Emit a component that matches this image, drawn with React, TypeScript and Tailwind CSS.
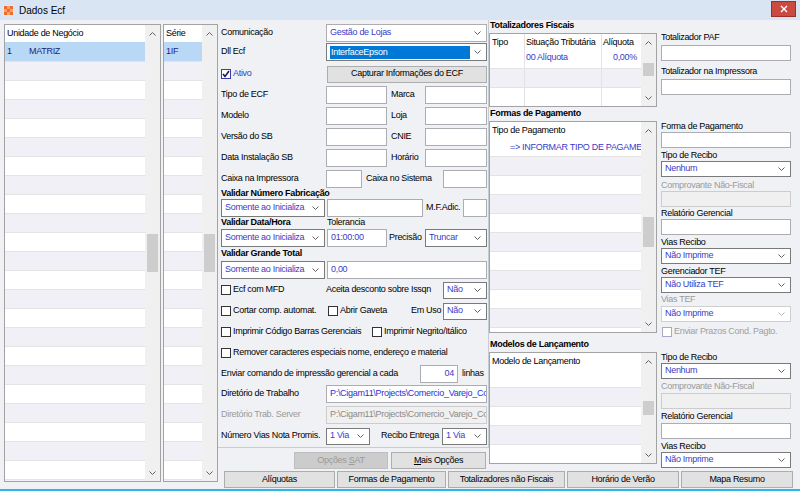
import React from "react";

const blue = "text-[#3b3bc8]";

function Chev({ up = false, light = false }: { up?: boolean; light?: boolean }) {
  return (
    <svg width="7" height="4" viewBox="0 0 7 4" className="shrink-0">
      <polyline
        points={up ? "0.5,3.5 3.5,0.5 6.5,3.5" : "0.5,0.5 3.5,3.5 6.5,0.5"}
        fill="none"
        stroke={light ? "#b4b4b4" : "#606060"}
        strokeWidth="1"
      />
    </svg>
  );
}

function Select({
  value,
  className = "",
  disabled = false,
  selected = false,
}: {
  value: string;
  className?: string;
  disabled?: boolean;
  selected?: boolean;
}) {
  return (
    <div
      className={`flex items-center shrink-0 bg-white border ${
        disabled ? "border-[#cfcfcf]" : "border-[#7a7a7a]"
      } pl-[3px] pr-[5px] ${className}`}
    >
      <div className="flex-1 min-w-0 overflow-hidden whitespace-nowrap mr-[4px]">
        {selected ? (
          <span className="block bg-[#0078d7] text-white pl-[1px] leading-[13px]">{value}</span>
        ) : (
          <span className={blue}>{value}</span>
        )}
      </div>
      <Chev light={disabled} />
    </div>
  );
}

function Input({
  children,
  className = "",
  disabled = false,
}: {
  children?: React.ReactNode;
  className?: string;
  disabled?: boolean;
}) {
  return (
    <div
      className={`flex items-center shrink-0 overflow-hidden whitespace-nowrap border px-[3px] ${
        disabled ? "bg-[#f0f0f0] border-[#cccccc] text-[#8a8a8a]" : "bg-white border-[#abadb3]"
      } ${className}`}
    >
      {children}
    </div>
  );
}

function Check({
  label,
  checked = false,
  disabled = false,
  className = "",
}: {
  label: string;
  checked?: boolean;
  disabled?: boolean;
  className?: string;
}) {
  return (
    <div className={`flex items-center shrink-0 whitespace-nowrap ${className}`}>
      <span
        className={`w-[10px] h-[10px] border bg-white flex items-center justify-center shrink-0 ${
          checked ? "border-[#3b3bb0]" : disabled ? "border-[#a8a8c8]" : "border-[#333333]"
        }`}
      >
        {checked && (
          <svg width="8" height="8" viewBox="0 0 8 8">
            <path d="M1 4 L3 6.5 L7 1" fill="none" stroke="#1a1a60" strokeWidth="1.6" />
          </svg>
        )}
      </span>
      <span className={`ml-[2px] ${checked ? blue : disabled ? "text-[#a0a0a0]" : ""}`}>{label}</span>
    </div>
  );
}

function Btn({ label, className = "", disabled = false }: { label: React.ReactNode; className?: string; disabled?: boolean }) {
  return (
    <div
      className={`flex items-center justify-center shrink-0 border whitespace-nowrap ${
        disabled ? "bg-[#cccccc] border-[#bfbfbf] text-[#9a9a9a]" : "bg-[#e1e1e1] border-[#adadad] text-black"
      } ${className}`}
    >
      {label}
    </div>
  );
}

function ScrollBar({ thumb }: { thumb?: string }) {
  return (
    <div className="w-[15px] shrink-0 bg-[#f0f0f0] flex flex-col">
      <div className="h-[17px] flex items-center justify-center shrink-0">
        <Chev up />
      </div>
      <div className="flex-1 flex flex-col">{thumb && <div className={`mx-[2px] bg-[#cdcdcd] ${thumb}`} />}</div>
      <div className="h-[17px] flex items-center justify-center shrink-0">
        <Chev />
      </div>
    </div>
  );
}

function StripeRows({ count }: { count: number }) {
  return (
    <>
      {Array.from({ length: count }).map((_, i) => (
        <div
          key={i}
          className={`h-[19px] shrink-0 border-t border-[#e3e3e3] ${i % 2 === 0 ? "bg-[#f0f0f6]" : "bg-white"}`}
        />
      ))}
    </>
  );
}

function ListBox({
  width,
  header,
  first,
  thumb,
}: {
  width: string;
  header: string;
  first: React.ReactNode;
  thumb: string;
}) {
  return (
    <div className={`${width} h-[458px] border border-[#a3a3a3] bg-white flex`}>
      <div className="flex-1 min-w-0 flex flex-col overflow-hidden">
        <div className="h-[17px] shrink-0 flex items-center pl-[2px]">{header}</div>
        <div className="h-[19px] shrink-0 flex items-center pl-[2px] bg-[#b9d8f6] text-[#1e1e78]">{first}</div>
        <StripeRows count={23} />
      </div>
      <ScrollBar thumb={thumb} />
    </div>
  );
}

function Grid({
  height,
  header,
  row,
  thumb,
  rows,
}: {
  height: string;
  header: string;
  row?: React.ReactNode;
  thumb: string;
  rows: number;
}) {
  return (
    <div className={`${height} border border-[#a3a3a3] bg-white flex shrink-0`}>
      <div className="flex-1 min-w-0 flex flex-col overflow-hidden">
        <div className="h-[17px] shrink-0 flex items-center pl-[2px] whitespace-nowrap">{header}</div>
        <div className="h-[17px] shrink-0 flex items-center whitespace-nowrap overflow-hidden">{row}</div>
        <StripeRows count={rows} />
      </div>
      <ScrollBar thumb={thumb} />
    </div>
  );
}

function TotGrid() {
  const cols = ["w-[35px]", "w-[77px]", "flex-1"];
  return (
    <div className="h-[74px] border border-[#a3a3a3] bg-white flex shrink-0">
      <div className="flex-1 min-w-0 flex flex-col overflow-hidden">
        <div className="h-[34px] shrink-0 flex">
          <div className="w-[35px] border-r border-[#e3e3e3] pl-[2px] pt-[2px]">Tipo</div>
          <div className="w-[77px] border-r border-[#e3e3e3] pl-[1px] pt-[2px] whitespace-nowrap">
            <div className="h-[15px] leading-[13px]">Situação Tributária</div>
            <div className={blue}>00 Alíquota</div>
          </div>
          <div className="flex-1 pt-[2px] pr-[4px]">
            <div className="h-[15px] leading-[13px] pl-[1px]">Alíquota</div>
            <div className={`${blue} text-right`}>0,00%</div>
          </div>
        </div>
        {[0, 1].map((r) => (
          <div key={r} className={`h-[19px] shrink-0 flex border-t border-[#e3e3e3] ${r === 0 ? "bg-[#f0f0f6]" : "bg-white"}`}>
            {cols.map((c, i) => (
              <div key={i} className={`${c} ${i < 2 ? "border-r border-[#e3e3e3]" : ""}`} />
            ))}
          </div>
        ))}
      </div>
      <ScrollBar thumb="mt-[12px] h-[13px]" />
    </div>
  );
}

function Logo() {
  return (
    <svg width="11" height="11" viewBox="0 0 11 11">
      <rect x="0" y="0" width="11" height="11" fill="#fbe3d2" />
      <path d="M1 1h3v3h-3zM7 1h3v3h-3zM4 4h3v3h-3zM1 7h3v3h-3zM7 7h3v3h-3z" fill="#ef6b2a" />
      <path d="M4 1h3v3h-3zM1 4h3v3h-3zM7 4h3v3h-3zM4 7h3v3h-3z" fill="#f7a06a" />
    </svg>
  );
}

function Middle() {
  return (
    <div className="w-[271px] shrink-0 flex flex-col">
      <div className="h-[428px] shrink-0 border-r border-b border-[#c6ccd4] pl-[3px] pt-[4px] flex flex-col whitespace-nowrap">
        <div className="flex items-center h-[18px]">
          <span className="w-[105px]">Comunicação</span>
          <Select value="Gestão de Lojas" className="w-[161px] h-[18px] border-[#adadad]" />
        </div>
        <div className="flex items-center h-[18px] mt-[1px]">
          <span className="w-[105px]">Dll Ecf</span>
          <Select value="InterfaceEpson" selected className="w-[161px] h-[18px]" />
        </div>
        <div className="flex items-center h-[18px] mt-[4px]">
          <Check label="Ativo" checked className="w-[106px]" />
          <Btn label="Capturar Informações do ECF" className="w-[160px] h-[17px]" />
        </div>
        {[
          ["Tipo de ECF", "Marca"],
          ["Modelo", "Loja"],
          ["Versão do SB", "CNIE"],
          ["Data Instalação SB", "Horário"],
        ].map(([a, b]) => (
          <div key={a} className="flex items-center h-[18px] mt-[3px]">
            <span className="w-[105px]">{a}</span>
            <Input className="w-[61px] h-[18px]" />
            <span className="w-[38px] pl-[4px]">{b}</span>
            <Input className="w-[62px] h-[18px]" />
          </div>
        ))}
        <div className="flex items-center h-[18px] mt-[3px]">
          <span className="w-[105px]">Caixa na Impressora</span>
          <Input className="w-[36px] h-[18px]" />
          <span className="w-[81px] pl-[4px]">Caixa no Sistema</span>
          <Input className="w-[44px] h-[18px]" />
        </div>
        <div className="h-[11px] flex items-center font-bold">Validar Número Fabricação</div>
        <div className="flex items-center h-[18px]">
          <Select value="Somente ao Inicializa" className="w-[104px] h-[18px]" />
          <Input className="w-[96px] h-[18px] ml-[2px]" />
          <span className="w-[40px] pl-[3px]">M.F.Adic.</span>
          <Input className="w-[24px] h-[18px]" />
        </div>
        <div className="h-[12px] flex items-center">
          <span className="w-[106px] font-bold">Validar Data/Hora</span>
          <span>Tolerancia</span>
        </div>
        <div className="flex items-center h-[18px]">
          <Select value="Somente ao Inicializa" className="w-[104px] h-[18px]" />
          <Input className="w-[60px] h-[18px] ml-[2px]">
            <span className={blue}>01:00:00</span>
          </Input>
          <span className="w-[38px] pl-[2px]">Precisão</span>
          <Select value="Truncar" className="w-[62px] h-[18px]" />
        </div>
        <div className="h-[13px] flex items-center font-bold">Validar Grande Total</div>
        <div className="flex items-center h-[18px] mt-[1px]">
          <Select value="Somente ao Inicializa" className="w-[104px] h-[18px]" />
          <Input className="w-[160px] h-[18px] ml-[2px]">
            <span className={blue}>0,00</span>
          </Input>
        </div>
        <div className="flex items-center h-[18px] mt-[2px]">
          <Check label="Ecf com MFD" className="w-[105px]" />
          <span className="w-[117px]">Aceita desconto sobre Issqn</span>
          <Select value="Não" className="w-[44px] h-[17px]" />
        </div>
        <div className="flex items-center h-[18px] mt-[3px]">
          <Check label="Cortar comp. automat." className="w-[107px]" />
          <Check label="Abrir Gaveta" className="w-[83px]" />
          <span className="w-[32px]">Em Uso</span>
          <Select value="Não" className="w-[44px] h-[17px]" />
        </div>
        <div className="flex items-center h-[20px] mt-[2px]">
          <Check label="Imprimir Código Barras Gerenciais" className="w-[151px]" />
          <Check label="Imprimir Negrito/Itálico" />
        </div>
        <div className="flex items-center h-[21px]">
          <Check label="Remover caracteres especiais nome, endereço e material" />
        </div>
        <div className="flex items-center h-[18px] mt-[2px]">
          <span className="w-[199px]">Enviar comando de impressão gerencial a cada</span>
          <Input className="w-[38px] h-[18px] justify-end">
            <span className={blue}>04</span>
          </Input>
          <span className="pl-[4px]">linhas</span>
        </div>
        <div className="flex items-center h-[18px] mt-[2px]">
          <span className="w-[105px]">Diretório de Trabalho</span>
          <Input className="w-[161px] h-[18px]">
            <span className="text-[#2334d6]">P:\Cigam11\Projects\Comercio_Varejo_Comercial</span>
          </Input>
        </div>
        <div className="flex items-center h-[18px] mt-[3px]">
          <span className="w-[105px] text-[#9a9a9a]">Diretório Trab. Server</span>
          <Input disabled className="w-[161px] h-[18px]">
            P:\Cigam11\Projects\Comercio_Varejo_Comercial
          </Input>
        </div>
        <div className="flex items-center h-[18px] mt-[3px]">
          <span className="w-[105px]">Número Vias Nota Promis.</span>
          <Select value="1 Via" className="w-[44px] h-[17px]" />
          <span className="w-[61px] ml-[11px]">Recibo Entrega</span>
          <Select value="1 Via" className="w-[45px] h-[17px]" />
        </div>
      </div>
      <div className="flex mt-[4px] h-[17px] pl-[76px] gap-[3px]">
        <Btn
          disabled
          className="w-[94px] h-[17px]"
          label={
            <span>
              Opções <span className="underline">S</span>AT
            </span>
          }
        />
        <Btn
          className="w-[95px] h-[17px]"
          label={
            <span>
              <span className="underline">M</span>ais Opções
            </span>
          }
        />
      </div>
    </div>
  );
}

function ColA() {
  return (
    <div className="w-[168px] shrink-0 flex flex-col">
      <div className="h-[13px] leading-[11px] font-bold pl-[1px] shrink-0">Totalizadores Fiscais</div>
      <TotGrid />
      <div className="h-[14px] flex items-center font-bold pl-[1px] shrink-0">Formas de Pagamento</div>
      <Grid
        height="h-[212px]"
        header="Tipo de Pagamento"
        row={<span className={`${blue} pl-[20px]`}>=&gt; INFORMAR TIPO DE PAGAMENTO</span>}
        thumb="mt-[78px] h-[30px]"
        rows={10}
      />
      <div className="h-[19px] flex items-end pb-[1px] font-bold pl-[1px] shrink-0">Modelos de Lançamento</div>
      <Grid height="h-[112px]" header="Modelo de Lançamento" thumb="mt-[31px] h-[14px]" rows={5} />
    </div>
  );
}

function L({ children, className = "", gray = false }: { children: React.ReactNode; className?: string; gray?: boolean }) {
  return (
    <div className={`h-[11px] leading-[11px] shrink-0 whitespace-nowrap ${gray ? "text-[#9a9a9a]" : ""} ${className}`}>
      {children}
    </div>
  );
}

function ColB() {
  return (
    <div className="w-[130px] ml-[4px] shrink-0 flex flex-col">
      <L className="mt-[12px]">Totalizador PAF</L>
      <Input className="h-[16px] mt-[2px]" />
      <L className="mt-[5px]">Totalizador na Impressora</L>
      <Input className="h-[16px] mt-[2px]" />
      <L className="mt-[26px]">Forma de Pagamento</L>
      <Input className="h-[16px]" />
      <L className="mt-[2px]">Tipo de Recibo</L>
      <Select value="Nenhum" className="h-[16px]" />
      <L gray className="mt-[3px]">Comprovante Não-Fiscal</L>
      <Input disabled className="h-[16px]" />
      <L className="mt-[1px]">Relatório Gerencial</L>
      <Input className="h-[16px]" />
      <L className="mt-[2px]">Vias Recibo</L>
      <Select value="Não Imprime" className="h-[16px]" />
      <L className="mt-[2px]">Gerenciador TEF</L>
      <Select value="Não Utiliza TEF" className="h-[16px]" />
      <L gray className="mt-[1px]">Vias TEF</L>
      <Select disabled value="Não Imprime" className="h-[16px] mt-[1px]" />
      <div className="h-[12px] mt-[4px] flex items-center pl-[1px]">
        <Check disabled label="Enviar Prazos Cond. Pagto." />
      </div>
      <L className="mt-[14px]">Tipo de Recibo</L>
      <Select value="Nenhum" className="h-[16px]" />
      <L gray className="mt-[2px]">Comprovante Não-Fiscal</L>
      <Input disabled className="h-[16px] mt-[1px]" />
      <L className="mt-[2px]">Relatório Gerencial</L>
      <Input className="h-[16px] mt-[1px]" />
      <L className="mt-[2px]">Vias Recibo</L>
      <Select value="Não Imprime" className="h-[16px]" />
    </div>
  );
}

export default function App() {
  return (
    <div className="w-[800px] h-[491px] overflow-hidden bg-[#eff1f5] text-[9px] tracking-[-0.3px] text-black flex flex-col border-b-2 border-b-[#2ab7e9] [font-family:'Liberation_Sans',Arial,sans-serif]">
      <div className="h-[20px] shrink-0 bg-[#dae5f3] flex items-center pl-[3px]">
        <Logo />
        <span className="ml-[5px] text-[10px] tracking-normal text-black">Dados Ecf</span>
        <div className="ml-auto mr-[4px] self-start mt-[1px] w-[25px] h-[16px] bg-[#c94a40] border border-[#9e2f28] flex items-center justify-center">
          <svg width="8" height="8" viewBox="0 0 8 8">
            <path d="M1 1L7 7M7 1L1 7" stroke="white" strokeWidth="1.4" />
          </svg>
        </div>
      </div>
      <div className="flex flex-1 min-h-0">
        <div className="flex pl-[4px] pt-[4px] gap-[2px] w-[218px] shrink-0">
          <ListBox
            width="w-[157px]"
            header="Unidade de Negócio"
            first={
              <>
                <span className="w-[22px]">1</span>MATRIZ
              </>
            }
            thumb="mt-[192px] h-[38px]"
          />
          <ListBox width="w-[55px]" header="Série" first="1IF" thumb="mt-[192px] h-[38px]" />
        </div>
        <div className="flex flex-col">
          <div className="flex h-[451px]">
            <Middle />
            <ColA />
            <ColB />
          </div>
          <div className="flex h-[17px] ml-[6px] gap-[2px]">
            <Btn label="Alíquotas" className="w-[111px] h-[17px]" />
            <Btn label="Formas de Pagamento" className="w-[109px] h-[17px]" />
            <Btn label="Totalizadores não Fiscais" className="w-[117px] h-[17px]" />
            <Btn label="Horário de Verão" className="w-[112px] h-[17px]" />
            <Btn label="Mapa Resumo" className="w-[112px] h-[17px]" />
          </div>
        </div>
      </div>
    </div>
  );
}
